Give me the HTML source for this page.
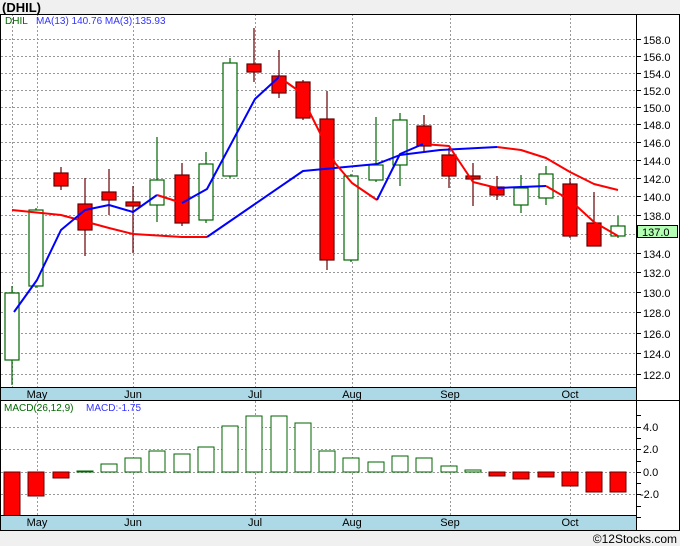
<!DOCTYPE html>
<html><head><meta charset="utf-8"><style>
html,body{margin:0;padding:0;background:#fff}
svg{display:block;font-family:"Liberation Sans",Verdana,sans-serif}
</style></head><body>
<svg width="680" height="546" viewBox="0 0 680 546" xmlns="http://www.w3.org/2000/svg">
<rect x="0" y="0" width="680" height="546" fill="#fff"/>
<rect x="0" y="0" width="680" height="14" fill="#f0f0f0"/>
<rect x="0" y="531" width="680" height="15" fill="#f0f0f0"/>
<text x="2" y="12" font-size="13" font-weight="bold" fill="#000">(DHIL)</text>
<text x="677" y="543" font-size="12" text-anchor="end" fill="#000">©12Stocks.com</text>

<g stroke="#999" stroke-dasharray="2,2" stroke-width="1">
<line x1="1" x2="636" y1="39.5" y2="39.5"/><line x1="1" x2="636" y1="56.5" y2="56.5"/><line x1="1" x2="636" y1="73.5" y2="73.5"/><line x1="1" x2="636" y1="90.5" y2="90.5"/><line x1="1" x2="636" y1="107.5" y2="107.5"/><line x1="1" x2="636" y1="124.5" y2="124.5"/><line x1="1" x2="636" y1="142.5" y2="142.5"/><line x1="1" x2="636" y1="160.5" y2="160.5"/><line x1="1" x2="636" y1="178.5" y2="178.5"/><line x1="1" x2="636" y1="196.5" y2="196.5"/><line x1="1" x2="636" y1="215.5" y2="215.5"/><line x1="1" x2="636" y1="234.5" y2="234.5"/><line x1="1" x2="636" y1="253.5" y2="253.5"/><line x1="1" x2="636" y1="272.5" y2="272.5"/><line x1="1" x2="636" y1="292.5" y2="292.5"/><line x1="1" x2="636" y1="312.5" y2="312.5"/><line x1="1" x2="636" y1="333.5" y2="333.5"/><line x1="1" x2="636" y1="353.5" y2="353.5"/><line x1="1" x2="636" y1="374.5" y2="374.5"/>
<line x1="1" x2="636" y1="427.5" y2="427.5"/><line x1="1" x2="636" y1="449.5" y2="449.5"/><line x1="1" x2="636" y1="472.5" y2="472.5"/><line x1="1" x2="636" y1="494.5" y2="494.5"/>
<line y1="14" y2="387" x1="12.5" x2="12.5"/>
<line y1="14" y2="387" x1="37.5" x2="37.5"/><line y1="14" y2="387" x1="133.5" x2="133.5"/><line y1="14" y2="387" x1="255.5" x2="255.5"/><line y1="14" y2="387" x1="352.5" x2="352.5"/><line y1="14" y2="387" x1="450.5" x2="450.5"/><line y1="14" y2="387" x1="570.5" x2="570.5"/>
<line y1="401" y2="515" x1="37.5" x2="37.5"/><line y1="401" y2="515" x1="133.5" x2="133.5"/><line y1="401" y2="515" x1="255.5" x2="255.5"/><line y1="401" y2="515" x1="352.5" x2="352.5"/><line y1="401" y2="515" x1="450.5" x2="450.5"/><line y1="401" y2="515" x1="570.5" x2="570.5"/>
</g>

<text x="5" y="24" font-size="10" fill="#060">DHIL</text>
<text x="36" y="24" font-size="10" fill="#33f">MA(13)  140.76  MA(3)  135.93</text>

<g stroke-width="1.2">
<g stroke="#060" fill="#fff">
<line x1="12" x2="12" y1="286" y2="385"/><rect x="5" y="293" width="14" height="67"/>
<line x1="36" x2="36" y1="208" y2="288"/><rect x="29" y="210" width="14" height="76"/>
<line x1="157" x2="157" y1="137" y2="222"/><rect x="150" y="180" width="14" height="25"/>
<line x1="206" x2="206" y1="152" y2="223"/><rect x="199" y="164" width="14" height="56"/>
<line x1="230" x2="230" y1="58" y2="178"/><rect x="223" y="63" width="14" height="113"/>
<line x1="351" x2="351" y1="174" y2="262"/><rect x="344" y="176" width="14" height="84"/>
<line x1="376" x2="376" y1="117" y2="182"/><rect x="369" y="165" width="14" height="15"/>
<line x1="400" x2="400" y1="113" y2="186"/><rect x="393" y="120" width="14" height="45"/>
<line x1="521" x2="521" y1="175" y2="213"/><rect x="514" y="188" width="14" height="17"/>
<line x1="546" x2="546" y1="166" y2="205"/><rect x="539" y="174" width="14" height="24"/>
<line x1="618" x2="618" y1="216" y2="238"/><rect x="611" y="226" width="14" height="10"/>
</g>
<g stroke="#600" fill="#f00">
<line x1="61" x2="61" y1="167" y2="190"/><rect x="54" y="173" width="14" height="13"/>
<line x1="85" x2="85" y1="178" y2="256"/><rect x="78" y="204" width="14" height="26"/>
<line x1="109" x2="109" y1="169" y2="215"/><rect x="102" y="192" width="14" height="8"/>
<line x1="133" x2="133" y1="186" y2="253"/><rect x="126" y="202" width="14" height="4"/>
<line x1="182" x2="182" y1="163" y2="226"/><rect x="175" y="175" width="14" height="48"/>
<line x1="254" x2="254" y1="28" y2="82"/><rect x="247" y="64" width="14" height="8"/>
<line x1="279" x2="279" y1="50" y2="98"/><rect x="272" y="76" width="14" height="17"/>
<line x1="303" x2="303" y1="80" y2="120"/><rect x="296" y="82" width="14" height="36"/>
<line x1="327" x2="327" y1="91" y2="270"/><rect x="320" y="119" width="14" height="141"/>
<line x1="424" x2="424" y1="115" y2="152"/><rect x="417" y="126" width="14" height="20"/>
<line x1="449" x2="449" y1="148" y2="188"/><rect x="442" y="155" width="14" height="21"/>
<line x1="473" x2="473" y1="163" y2="206"/><rect x="466" y="176" width="14" height="3"/>
<line x1="497" x2="497" y1="176" y2="200"/><rect x="490" y="187" width="14" height="8"/>
<line x1="570" x2="570" y1="178" y2="238"/><rect x="563" y="184" width="14" height="52"/>
<line x1="594" x2="594" y1="192" y2="246"/><rect x="587" y="223" width="14" height="23"/>
</g>
</g>

<g fill="none" stroke-width="2" stroke-linejoin="round">
<polyline stroke="#f00" points="12,210 61,215 109,228 133,234 182,237 207,237"/>
<polyline stroke="#00f" points="207,237 303,171 377,164 400,155 440,150 497,147"/>
<polyline stroke="#f00" points="497,147 521,150 546,158 570,172 594,184 618,190"/>
<polyline stroke="#00f" points="14,312 37,280 61,230 85,210 109,205"/>
<polyline stroke="#00f" points="109,205 133,212 157,195"/>
<polyline stroke="#f00" points="157,195 182,203"/>
<polyline stroke="#00f" points="182,203 207,189 255,99 279,77"/>
<polyline stroke="#f00" points="279,77 296,89 310,113 335,163 352,183 377,200"/>
<polyline stroke="#00f" points="377,200 400,154 423,144"/>
<polyline stroke="#f00" points="423,144 449,146 473,182 497,188"/>
<polyline stroke="#00f" points="497,188 521,187 546,186"/>
<polyline stroke="#f00" points="546,186 570,200 594,222 618,236"/>
</g>

<g stroke-width="1">
<g fill="#fff" stroke="#060">
<rect x="77" y="471" width="16" height="1"/>
<rect x="101" y="464" width="16" height="8"/>
<rect x="125" y="458" width="16" height="14"/>
<rect x="149" y="451" width="16" height="21"/>
<rect x="174" y="454" width="16" height="18"/>
<rect x="198" y="447" width="16" height="25"/>
<rect x="222" y="426" width="16" height="46"/>
<rect x="246" y="416" width="16" height="56"/>
<rect x="271" y="416" width="16" height="56"/>
<rect x="295" y="423" width="16" height="49"/>
<rect x="319" y="451" width="16" height="21"/>
<rect x="343" y="458" width="16" height="14"/>
<rect x="368" y="462" width="16" height="10"/>
<rect x="392" y="456" width="16" height="16"/>
<rect x="416" y="458" width="16" height="14"/>
<rect x="441" y="466" width="16" height="6"/>
<rect x="465" y="470" width="16" height="2"/>
</g>
<g fill="#f00" stroke="#600">
<rect x="4" y="472" width="16" height="44"/>
<rect x="28" y="472" width="16" height="24"/>
<rect x="53" y="472" width="16" height="6"/>
<rect x="489" y="472" width="16" height="4"/>
<rect x="513" y="472" width="16" height="7"/>
<rect x="538" y="472" width="16" height="5"/>
<rect x="562" y="472" width="16" height="14"/>
<rect x="586" y="472" width="16" height="20"/>
<rect x="610" y="472" width="16" height="20"/>
</g>
</g>
<text x="4" y="411" font-size="10" fill="#060">MACD(26,12,9)</text>
<text x="86" y="411" font-size="10" fill="#33f">MACD:-1.75</text>

<rect x="1" y="387" width="635" height="14" fill="#add8e6"/>
<rect x="1" y="515" width="635" height="15" fill="#add8e6"/>
<g font-size="11" fill="#000" text-anchor="middle">
<text x="37" y="398">May</text><text x="133" y="398">Jun</text><text x="255" y="398">Jul</text><text x="352" y="398">Aug</text><text x="450" y="398">Sep</text><text x="570" y="398">Oct</text>
<text x="37" y="526">May</text><text x="133" y="526">Jun</text><text x="255" y="526">Jul</text><text x="352" y="526">Aug</text><text x="450" y="526">Sep</text><text x="570" y="526">Oct</text>
</g>

<g stroke="#000" fill="none" stroke-width="1">
<rect x="0.5" y="14.5" width="679" height="516"/>
<line x1="636.5" x2="636.5" y1="14" y2="531"/>
<line x1="0" x2="636" y1="387.5" y2="387.5"/>
<line x1="0" x2="680" y1="400.5" y2="400.5"/>
<line x1="0" x2="636" y1="515.5" y2="515.5"/>
</g>

<g stroke="#000" stroke-width="1">
<line x1="636" x2="641" y1="39.5" y2="39.5"/><line x1="636" x2="641" y1="56.5" y2="56.5"/><line x1="636" x2="641" y1="73.5" y2="73.5"/><line x1="636" x2="641" y1="90.5" y2="90.5"/><line x1="636" x2="641" y1="107.5" y2="107.5"/><line x1="636" x2="641" y1="124.5" y2="124.5"/><line x1="636" x2="641" y1="142.5" y2="142.5"/><line x1="636" x2="641" y1="160.5" y2="160.5"/><line x1="636" x2="641" y1="178.5" y2="178.5"/><line x1="636" x2="641" y1="196.5" y2="196.5"/><line x1="636" x2="641" y1="215.5" y2="215.5"/><line x1="636" x2="641" y1="253.5" y2="253.5"/><line x1="636" x2="641" y1="272.5" y2="272.5"/><line x1="636" x2="641" y1="292.5" y2="292.5"/><line x1="636" x2="641" y1="312.5" y2="312.5"/><line x1="636" x2="641" y1="333.5" y2="333.5"/><line x1="636" x2="641" y1="353.5" y2="353.5"/><line x1="636" x2="641" y1="374.5" y2="374.5"/>
<line x1="636" x2="641" y1="415.5" y2="415.5"/><line x1="636" x2="641" y1="427.5" y2="427.5"/><line x1="636" x2="641" y1="438.5" y2="438.5"/><line x1="636" x2="641" y1="449.5" y2="449.5"/><line x1="636" x2="641" y1="461.5" y2="461.5"/><line x1="636" x2="641" y1="472.5" y2="472.5"/><line x1="636" x2="641" y1="483.5" y2="483.5"/><line x1="636" x2="641" y1="494.5" y2="494.5"/><line x1="636" x2="641" y1="506.5" y2="506.5"/><line x1="636" x2="641" y1="517.5" y2="517.5"/>
</g>
<g font-size="11" fill="#000">
<text x="643" y="44">158.0</text><text x="643" y="61">156.0</text><text x="643" y="78">154.0</text><text x="643" y="95">152.0</text><text x="643" y="112">150.0</text><text x="643" y="129">148.0</text><text x="643" y="147">146.0</text><text x="643" y="165">144.0</text><text x="643" y="183">142.0</text><text x="643" y="201">140.0</text><text x="643" y="220">138.0</text><text x="643" y="258">134.0</text><text x="643" y="277">132.0</text><text x="643" y="297">130.0</text><text x="643" y="317">128.0</text><text x="643" y="338">126.0</text><text x="643" y="358">124.0</text><text x="643" y="379">122.0</text>
<text x="643" y="431">4.0</text><text x="643" y="453">2.0</text><text x="643" y="476">0.0</text><text x="640" y="498">-2.0</text>
</g>
<rect x="637.5" y="225.5" width="40" height="12" fill="#b3ffb3" stroke="#000"/>
<text x="642" y="236" font-size="11" fill="#000">137.0</text>
</svg>
</body></html>
